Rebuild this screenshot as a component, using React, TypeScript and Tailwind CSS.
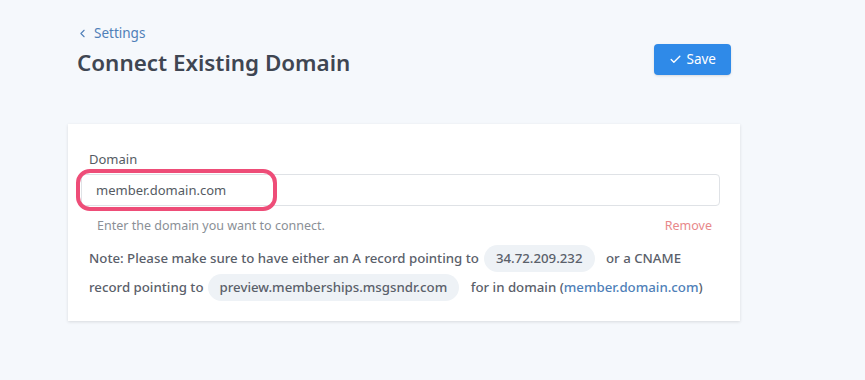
import { Check, ChevronLeft } from "lucide-react";

export default function App() {
    return (
        <div className="min-h-[380px] w-[865px] bg-[#f5f8fc] text-[#4a5260]" style={{ fontFamily: '"Noto Sans", "Open Sans", sans-serif' }}>
            <div className="w-[672px] ml-[68px] pt-[24px]">
                <div className="flex items-end justify-between pl-[9px] pr-[9px]">
                    <div>
                        <a href="#" className="flex items-center gap-[5px] text-[13.5px] text-[#4f7fb8] leading-[18px]">
                            <ChevronLeft size={13} strokeWidth={2} className="-ml-[1px]" />
                            Settings
                        </a>
                        <h1 className="mt-[6px] text-[22.4px] font-semibold text-[#3f4652] leading-[30px]">Connect Existing Domain</h1>
                    </div>
                    <button className="mb-[3px] flex items-center gap-[5px] h-[31px] px-[15px] rounded-[4px] bg-[#2f8ae8] text-white text-[13.5px] shadow-sm">
                        <Check size={13} strokeWidth={2.5} />
                        Save
                    </button>
                </div>

                <div className="mt-[46px] bg-white shadow-[0_1px_3px_rgba(0,0,0,0.12)] px-[13px] pt-[26px] pb-[19px]">
                    <label className="block pl-[8px] text-[13px] text-[#555b63] leading-[18px]">Domain</label>
                    <div className="relative mt-[6px] w-[639px]">
                        <input
                            type="text"
                            defaultValue="member.domain.com"
                            className="block w-full h-[32px] px-[14px] border border-[#dfe2e6] rounded-[4px] text-[13px] text-[#555b63] outline-none"
                        />
                        <div className="absolute left-[-5px] top-[-5px] w-[201px] h-[42px] rounded-[14px] border-[4px] border-[#ee4d78] pointer-events-none" />
                    </div>
                    <div className="flex justify-between mt-[11px] pl-[16px] pr-[15px] text-[12.5px] leading-[18px]">
                        <span className="text-[#8a8f96]">Enter the domain you want to connect.</span>
                        <a href="#" className="text-[#e8888a]">Remove</a>
                    </div>
                    <p className="mt-[9px] pl-[8px] text-[13.25px] font-medium text-[#5a606a] leading-[29px]">
                        Note: Please make sure to have either an A record pointing to
                        <span className="inline-block ml-[5px] mr-[8px] px-[12px] rounded-full bg-[#eef2f6] leading-[27px]">34.72.209.232</span>
                        {" "}or a CNAME
                        <br />
                        record pointing to
                        <span className="inline-block ml-[4px] mr-[8px] px-[12px] rounded-full bg-[#eef2f6] leading-[27px]">preview.memberships.msgsndr.com</span>
                        {" "}for in domain (<a href="#" className="text-[#4f7fb8]">member.domain.com</a>)
                    </p>
                </div>
            </div>
        </div>
    );
}
